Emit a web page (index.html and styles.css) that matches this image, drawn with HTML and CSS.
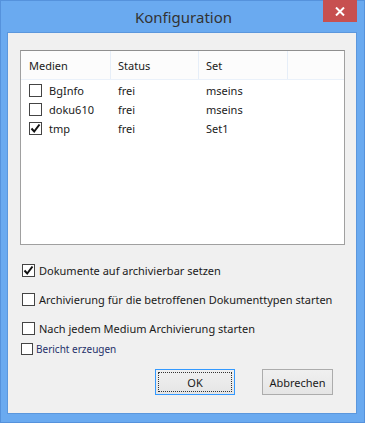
FILE: index.html
```html
<!DOCTYPE html>
<html lang="de">
<head>
    <meta charset="UTF-8">
    <title>Konfiguration</title>
    <link rel="stylesheet" href="styles.css">
</head>
<body>
    <div class="window">
        <div class="titlebar">
            <span class="title">Konfiguration</span>
            <span class="close">
                <svg width="10" height="9" viewBox="0 0 10 9">
                    <path d="M1 0.5 L9 8.5 M9 0.5 L1 8.5" stroke="#fff" stroke-width="2"/>
                </svg>
            </span>
        </div>

        <div class="client">
            <div class="listbox">
                <div class="row head">
                    <span class="cell">Medien</span>
                    <span class="cell">Status</span>
                    <span class="cell">Set</span>
                    <span class="cell"></span>
                </div>
                <div class="row">
                    <span class="cell"><span class="cb"></span>BgInfo</span>
                    <span class="cell">frei</span>
                    <span class="cell">mseins</span>
                </div>
                <div class="row">
                    <span class="cell"><span class="cb"></span>doku610</span>
                    <span class="cell">frei</span>
                    <span class="cell">mseins</span>
                </div>
                <div class="row">
                    <span class="cell"><span class="cb checked"><svg width="11" height="11" viewBox="0 0 11 11"><path d="M1.5 5.5 L4.2 8.5 L9.5 1.5" fill="none" stroke="#111" stroke-width="2"/></svg></span>tmp</span>
                    <span class="cell">frei</span>
                    <span class="cell">Set1</span>
                </div>
            </div>

            <div class="options">
                <label class="opt first"><span class="cb checked"><svg width="11" height="11" viewBox="0 0 11 11"><path d="M1.5 5.5 L4.2 8.5 L9.5 1.5" fill="none" stroke="#111" stroke-width="2"/></svg></span>Dokumente auf archivierbar setzen</label>
                <label class="opt"><span class="cb"></span>Archivierung für die betroffenen Dokumenttypen starten</label>
                <label class="opt"><span class="cb"></span>Nach jedem Medium Archivierung starten</label>
                <label class="opt small"><span class="cb"></span>Bericht erzeugen</label>
            </div>

            <div class="buttons">
                <button class="btn default"><span class="focus">OK</span></button>
                <button class="btn">Abbrechen</button>
            </div>
        </div>
    </div>
</body>
</html>
```

FILE: styles.css
```css
body {
    margin:             0;
    font-family:        "Noto Sans", "Open Sans", sans-serif;
    font-size:          11px;
    color:              #1a1a1a;
}

.window {
    width:              365px;
    height:             423px;
    box-sizing:         border-box;
    border:             1px solid #5592dc;
    background-color:   #6aaaf0;
    display:            flex;
    flex-direction:     column;
}

.titlebar {
    height:             31px;
    display:            flex;
    justify-content:    center;
    align-items:        center;
    position:           relative;
}

.title {
    font-size:          15px;
    color:              #333;
    margin-left:        2px;
}

.close {
    position:           absolute;
    top:                -1px;
    right:              7px;
    width:              34px;
    height:             22px;
    background-color:   #c75050;
    display:            flex;
    justify-content:    center;
    align-items:        center;
}

.client {
    flex:               1;
    margin:             0 7px 8px 6px;
    border:             1px solid #5b97dd;
    background-color:   #f0f0f0;
    padding:            17px 0 0 12px;
}

.listbox {
    width:              325px;
    height:             195px;
    box-sizing:         border-box;
    border:             1px solid #a0a0a0;
    border-top-color:   #8f8f8f;
    background-color:   #fff;
}

.row {
    display:            grid;
    grid-template-columns: 90px 88px 89px 1fr;
    height:             19px;
    align-items:        center;
}

.row.head {
    height:             28px;
    background-color:   #fcfcfc;
    border-bottom:      1px solid #eaf1fa;
    margin-bottom:      1px;
    align-items:        stretch;
}

.head .cell {
    border-right:       1px solid #e6eef8;
    display:            flex;
    align-items:        center;
}

.head .cell:last-child  { border-right: none; }

.cell {
    padding-left:       7px;
    white-space:        nowrap;
    display:            flex;
    align-items:        center;
}

.row .cell:first-child  { padding-left: 8px; }

.cb {
    width:              11px;
    height:             11px;
    border:             1px solid #444;
    background-color:   #fff;
    display:            inline-flex;
    justify-content:    center;
    align-items:        center;
    margin-right:       7px;
    flex-shrink:        0;
}

.options {
    padding-left:       2px;
    padding-top:        16px;
}

.opt {
    display:            flex;
    align-items:        center;
    height:             18px;
    margin-bottom:      11px;
    white-space:        nowrap;
}

.opt .cb                { margin-right: 4px; }

.opt.small {
    font-size:          10px;
    color:              #25306a;
    margin-top:         -8px;
    margin-left:        -1px;
}

.opt.small .cb {
    width:              10px;
    height:             10px;
    margin-right:       3px;
}

.buttons {
    display:            flex;
    gap:                27px;
    padding-left:       135px;
    margin-top:         3px;
}

.btn {
    height:             26px;
    font-family:        inherit;
    font-size:          11px;
    color:              #1a1a1a;
    border:             1px solid #acacac;
    background:         linear-gradient(#f0f0f0, #e5e5e5);
    padding:            0;
    width:              71px;
}

.btn.default {
    width:              80px;
    border-color:       #3399ff;
    padding:            2px;
}

.focus {
    display:            flex;
    justify-content:    center;
    align-items:        center;
    height:             100%;
    border:             1px dotted #333;
    box-sizing:         border-box;
}
```
